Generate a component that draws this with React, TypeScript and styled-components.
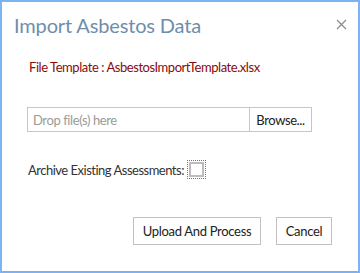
import styled, { createGlobalStyle } from "styled-components";

const GlobalStyle = createGlobalStyle`
  html, body {
    margin: 0;
    padding: 0;
    background: #ffffff;
  }
  body {
    font-family: Lato, "Open Sans", sans-serif;
  }
`;

const Dialog = styled.div`
  width: 360px;
  height: 273px;
  box-sizing: border-box;
  border: 2px solid #7db3f2;
  background: #ffffff;
  display: flex;
  flex-direction: column;
`;

const Header = styled.div`
  display: flex;
  align-items: center;
  justify-content: space-between;
  padding: 8px 11px 0 12px;
  height: 30px;
`;

const Title = styled.h1`
  margin: 0;
  font-size: 20px;
  font-weight: 400;
  letter-spacing: -0.15px;
  color: #6e8eab;
`;

const CloseButton = styled.button`
  border: none;
  background: none;
  padding: 0;
  width: 11px;
  height: 11px;
  margin-top: -2px;
  cursor: pointer;
  display: flex;
`;

const Body = styled.div`
  display: flex;
  flex-direction: column;
  padding: 18px 46px 0 25px;
`;

const Text = styled.div`
  font-size: 13px;
  letter-spacing: -0.4px;
`;

const TemplateNote = styled(Text)`
  color: #8b0a0a;
  line-height: 18px;
  padding-left: 2px;
  letter-spacing: -0.45px;
`;

const FileGroup = styled.div`
  display: flex;
  margin-top: 31px;
  height: 25px;
  box-sizing: border-box;
  border: 1px solid #c6c6c6;
`;

const DropZone = styled(Text)`
  flex: 1;
  display: flex;
  align-items: center;
  padding-left: 5px;
  color: #9a9a9a;
`;

const BrowseButton = styled.button`
  border: none;
  border-left: 1px solid #c6c6c6;
  background: #ffffff;
  width: 62px;
  font-family: inherit;
  font-size: 13px;
  letter-spacing: -0.4px;
  color: #222222;
  padding: 0;
`;

const CheckRow = styled.label`
  display: flex;
  align-items: center;
  margin-top: 28px;
  padding-left: 1px;
  font-size: 13px;
  letter-spacing: -0.5px;
  color: #333333;
  gap: 3px;
`;

const CheckFocus = styled.span`
  display: inline-flex;
  padding: 1px;
  border: 1px dotted #5b7a9c;
`;

const CheckBox = styled.span`
  display: block;
  width: 11px;
  height: 11px;
  border: 2px solid #bdbdbd;
  background: #ffffff;
`;

const Footer = styled.div`
  display: flex;
  justify-content: flex-end;
  gap: 15px;
  padding: 38px 26px 0 0;
`;

const Button = styled.button<{ $width: number }>`
  width: ${({ $width }) => $width}px;
  height: 28px;
  box-sizing: border-box;
  border: 1px solid #c2c2c2;
  background: #ffffff;
  font-family: inherit;
  font-size: 13px;
  letter-spacing: -0.3px;
  color: #222222;
  padding: 0;
`;

export default function App() {
  return (
    <>
      <GlobalStyle />
      <Dialog>
        <Header>
          <Title>Import Asbestos Data</Title>
          <CloseButton aria-label="Close">
            <svg width="11" height="11" viewBox="0 0 11 11">
              <path d="M1 1 L10 10 M10 1 L1 10" stroke="#8a8a8a" strokeWidth="1.2" />
            </svg>
          </CloseButton>
        </Header>
        <Body>
          <TemplateNote>File Template : AsbestosImportTemplate.xlsx</TemplateNote>
          <FileGroup>
            <DropZone>Drop file(s) here</DropZone>
            <BrowseButton>Browse...</BrowseButton>
          </FileGroup>
          <CheckRow>
            Archive Existing Assessments:
            <CheckFocus>
              <CheckBox />
            </CheckFocus>
          </CheckRow>
        </Body>
        <Footer>
          <Button $width={128}>Upload And Process</Button>
          <Button $width={56}>Cancel</Button>
        </Footer>
      </Dialog>
    </>
  );
}
